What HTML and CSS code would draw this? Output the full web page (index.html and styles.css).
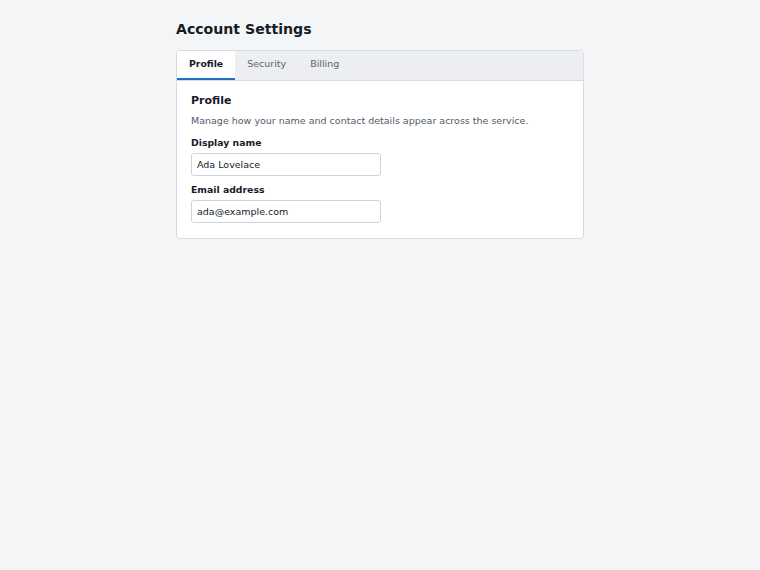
FILE: index.html
```html
<!DOCTYPE html>
<html lang="en">
<head>
  <meta charset="UTF-8">
  <title>Account Settings</title>
  <link rel="stylesheet" href="styles.css">
</head>
<body>
  <div class="page">
    <h1 class="page-title">Account Settings</h1>
    <div class="card">
      <div class="tabs">
        <div class="tab active">Profile</div>
        <div class="tab">Security</div>
        <div class="tab">Billing</div>
      </div>
      <div class="panel">
        <h2 class="panel-title">Profile</h2>
        <p class="panel-desc">Manage how your name and contact details appear across the service.</p>
        <label class="field">
          <span class="field-label">Display name</span>
          <input type="text" value="Ada Lovelace">
        </label>
        <label class="field">
          <span class="field-label">Email address</span>
          <input type="email" value="ada@example.com">
        </label>
      </div>
    </div>
  </div>
</body>
</html>
```

FILE: styles.css
```css
body {
  margin: 0;
  background: #f4f5f7;
  font-family: "DejaVu Sans", sans-serif;
  color: #1a1d24;
}
.page {
  width: 408px;
  margin: 0 auto;
  padding-top: 21px;
}
.page-title {
  margin: 0 0 12px 0;
  font-size: 14.1px;
  line-height: 17px;
  font-weight: 700;
  color: #161b26;
}
.card {
  background: #fff;
  border: 1px solid #d8dbe0;
  border-radius: 4px;
  overflow: hidden;
}
.tabs {
  display: flex;
  background: #eceef1;
  border-bottom: 1px solid #d8dbe0;
}
.tab {
  padding: 7px 12px 9px;
  font-size: 9.5px;
  line-height: 11px;
  color: #5c6370;
  border-bottom: 2px solid transparent;
}
.tab.active {
  background: #fff;
  color: #161b26;
  font-weight: 700;
  font-size: 9.3px;
  border-bottom-color: #1f6fc5;
}
.panel {
  padding: 13px 14px 15px;
}
.panel-title {
  margin: 0 0 8px 0;
  font-size: 11px;
  line-height: 13px;
  font-weight: 700;
  color: #161b26;
}
.panel-desc {
  margin: 0 0 11px 0;
  font-size: 9.5px;
  line-height: 11px;
  color: #545b68;
}
.field {
  display: flex;
  flex-direction: column;
  gap: 5px;
  margin-bottom: 8px;
}
.field:last-child {
  margin-bottom: 0;
}
.field-label {
  font-size: 9.3px;
  line-height: 11px;
  font-weight: 700;
  color: #161b26;
}
.field input {
  width: 190px;
  height: 23px;
  box-sizing: border-box;
  margin: 0;
  border: 1px solid #cfd3d9;
  border-radius: 3px;
  padding: 0 5px;
  font-family: "DejaVu Sans", sans-serif;
  font-size: 9.5px;
  color: #161b26;
}
```
